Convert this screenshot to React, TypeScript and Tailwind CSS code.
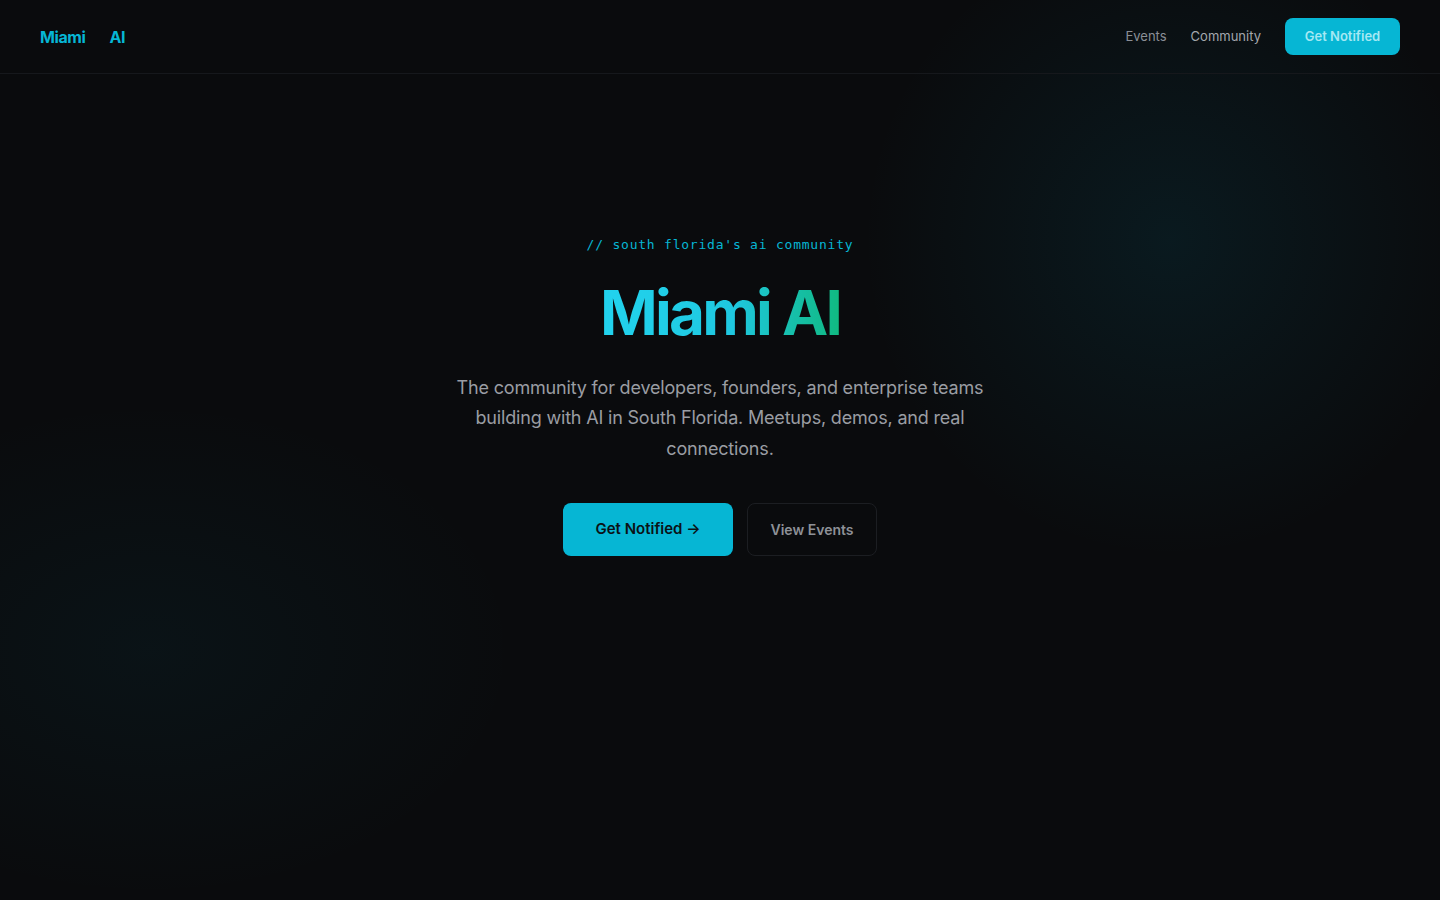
import React from "react";

export default function App() {
  return (
    <div
      className="relative min-h-[900px] w-full overflow-hidden bg-[#0a0b0d] text-white"
      style={{ fontFamily: "Inter, 'Noto Sans', sans-serif" }}
    >
      {/* background glows */}
      <div className="pointer-events-none absolute left-[860px] top-[-80px] h-[640px] w-[620px] rounded-full bg-[radial-gradient(ellipse_at_center,rgba(8,145,178,0.11),rgba(8,145,178,0.04)_45%,transparent_70%)]" />
      <div className="pointer-events-none absolute left-[-220px] top-[400px] h-[500px] w-[740px] rounded-full bg-[radial-gradient(ellipse_at_center,rgba(8,145,178,0.06),transparent_70%)]" />

      <header className="relative z-10 flex h-[74px] items-center justify-between border-b border-[#16181c] px-10">
        <div className="flex items-center gap-6 text-[16px] font-bold tracking-tight text-[#06b6d4]">
          <span>Miami</span>
          <span>AI</span>
        </div>
        <nav className="flex items-center">
          <a className="mr-6 text-[13px] text-[#8b8f96]">Events</a>
          <a className="mr-6 text-[13px] text-[#a3a7ad]">Community</a>
          <button className="h-[37px] w-[115px] rounded-lg bg-[#06b6d4] text-[13px] font-semibold text-[#a5e8f3]">
            Get Notified
          </button>
        </nav>
      </header>

      <main className="relative z-10 flex flex-col items-center pt-[161px]">
        <p
          className="text-[13px] tracking-[0.06em] text-[#06b6d4]"
          style={{ fontFamily: "'DejaVu Sans Mono', 'Liberation Mono', monospace" }}
        >
          // south florida's ai community
        </p>
        <h1 className="mt-[20px] bg-[linear-gradient(90deg,#22d3ee_0%,#1fc8e0_55%,#10b981_100%)] bg-clip-text text-[62px] font-bold leading-[76px] tracking-[-0.045em] text-transparent">
          Miami AI
        </h1>
        <p className="mt-[22px] max-w-[540px] text-center text-[18px] leading-[30.5px] tracking-[-0.01em] text-[#9a9da3]">
          The community for developers, founders, and enterprise teams building with AI in South Florida. Meetups, demos, and real connections.
        </p>
        <div className="mt-[39px] flex items-center gap-[14px]">
          <button className="h-[53px] w-[170px] rounded-lg bg-[#06b6d4] text-[15px] font-semibold text-[#0b1216]">
            Get Notified →
          </button>
          <button className="h-[53px] w-[130px] rounded-lg border border-[#1c1e22] text-[14px] font-semibold text-[#8e9197]">
            View Events
          </button>
        </div>
      </main>
    </div>
  );
}
